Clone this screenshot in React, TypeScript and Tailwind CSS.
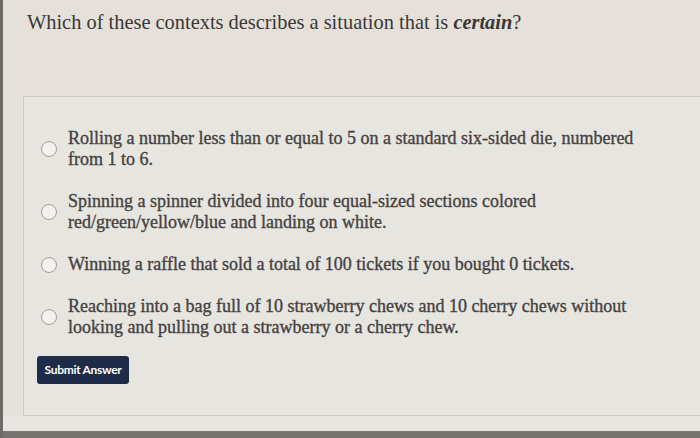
const OPTIONS = [
  'Rolling a number less than or equal to 5 on a standard six-sided die, numbered from 1 to 6.',
  'Spinning a spinner divided into four equal-sized sections colored red/green/yellow/blue and landing on white.',
  'Winning a raffle that sold a total of 100 tickets if you bought 0 tickets.',
  'Reaching into a bag full of 10 strawberry chews and 10 cherry chews without looking and pulling out a strawberry or a cherry chew.',
];

export default function App() {
  return (
    <div className="w-[700px] h-[438px] flex overflow-hidden bg-[#e5e0da]">
      {/* left edge of the screen frame */}
      <div className="w-[3px] bg-[#6d6a67]" />

      <div className="flex-1 flex flex-col">
        {/* Question */}
        <div className="h-[96px] pl-[24px] pt-[10px]">
          <h1 className="font-['Liberation_Serif',serif] text-[20.4px] leading-[25px] text-[#3a3836]">
            Which of these contexts describes a situation that is <b className="italic font-bold">certain</b>?
          </h1>
        </div>

        {/* Answer panel */}
        <div className="ml-[20px] h-[320px] border border-r-0 border-[#cdc9c3] bg-[#e7e5df] pl-[17px] pt-[31px]">
          <div className="flex flex-col gap-[21px]">
            {OPTIONS.map((text) => (
              <label key={text} className="flex items-center gap-[11px]">
                <span className="w-[16px] h-[16px] shrink-0 rounded-full border border-[#a19e99] bg-[#f3f2ef]" />
                <span className="w-[590px] font-['Liberation_Serif',serif] text-[18px] leading-[21px] text-[#45423f] [-webkit-text-stroke:0.35px_#45423f]">
                  {text}
                </span>
              </label>
            ))}
          </div>

          <button className="mt-[18px] -ml-[4px] w-[92px] h-[28px] rounded-[3px] bg-[#1f2c48] text-white font-['Lato',sans-serif] font-bold text-[12px] tracking-tight">
            Submit Answer
          </button>
        </div>

        {/* bottom of the screen */}
        <div className="h-[15px] bg-[#e9e6e1]" />
        <div className="flex-1 bg-[#77736f]" />
      </div>
    </div>
  );
}
